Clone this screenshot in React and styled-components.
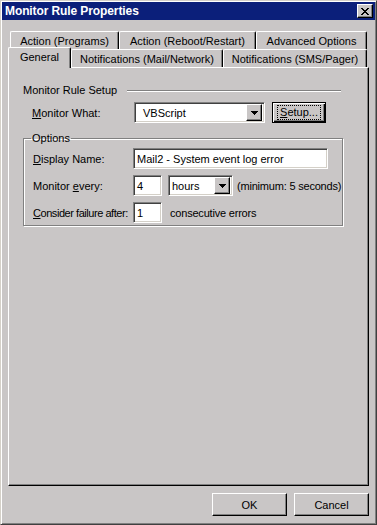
import React from 'react';
import styled, { createGlobalStyle, css } from 'styled-components';

const face = '#c9c6c6';

const GlobalStyle = createGlobalStyle`
  html, body {
    margin: 0;
    padding: 0;
    background: ${face};
  }
  * {
    box-sizing: border-box;
  }
`;

const raised = css`
  border: 1px solid;
  border-color: #ffffff #000000 #000000 #ffffff;
  box-shadow: inset -1px -1px #808080, inset 1px 1px ${face};
`;

const sunken = css`
  border: 1px solid;
  border-color: #808080 #ffffff #ffffff #808080;
  box-shadow: inset 1px 1px #404040, inset -1px -1px #d4d0c8;
`;

const Window = styled.div`
  width: 377px;
  height: 525px;
  display: flex;
  flex-direction: column;
  background: ${face};
  border: 1px solid;
  border-color: #d4d0c8 #404040 #404040 #d4d0c8;
  box-shadow: inset 1px 1px #ffffff, inset -1px -1px #808080;
  padding: 1px;
  font-family: "Liberation Sans", Arial, sans-serif;
  font-size: 11px;
  color: #000;
`;

const TitleBar = styled.div`
  height: 18px;
  background: #0b1f7a;
  display: flex;
  align-items: center;
  justify-content: space-between;
  padding: 0 2px 0 3px;
  color: #fff;
  font-weight: bold;
  font-size: 12px;
  letter-spacing: -0.1px;
`;

const CloseButton = styled.div`
  width: 16px;
  height: 14px;
  background: ${face};
  ${raised};
  display: flex;
  align-items: center;
  justify-content: center;
`;

const Body = styled.div`
  flex: 1;
  display: flex;
  flex-direction: column;
  padding: 11px 6px 0 6px;
`;

const TabRow = styled.div`
  display: flex;
  height: 18px;
  padding-left: ${p => p.$offset || 0}px;
`;

const Tab = styled.div`
  width: ${p => p.$width}px;
  height: ${p => (p.$active ? 21 : 18)}px;
  margin-top: ${p => (p.$active ? -2 : 0)}px;
  position: relative;
  z-index: ${p => (p.$active ? 2 : 1)};
  background: ${face};
  border-top: 1px solid #ffffff;
  border-left: 1px solid #ffffff;
  border-right: 1px solid #000000;
  border-radius: 2px 2px 0 0;
  box-shadow: inset -1px 0 #808080;
  display: flex;
  align-items: center;
  justify-content: center;
  padding-bottom: ${p => (p.$active ? 3 : 0)}px;
  white-space: nowrap;
`;

const Panel = styled.div`
  height: 419px;
  display: flex;
  flex-direction: column;
  border: 1px solid;
  border-color: #ffffff #000000 #000000 #ffffff;
  box-shadow: inset -1px -1px #808080;
  padding: 16px 25px 0 14px;
`;

const SectionHeader = styled.div`
  display: flex;
  align-items: center;
  height: 13px;
  line-height: 13px;
`;

const EtchedLine = styled.div`
  flex: 1;
  height: 2px;
  margin: 1px 2px 0 10px;
  border-top: 1px solid #808080;
  border-bottom: 1px solid #ffffff;
`;

const FieldRow = styled.div`
  display: flex;
  align-items: center;
  height: 21px;
  margin-top: ${p => p.$top || 0}px;
  padding-left: ${p => p.$indent || 0}px;
`;

const Label = styled.span`
  width: ${p => p.$width || 100}px;
  flex-shrink: 0;
  white-space: nowrap;
  letter-spacing: ${p => (p.$tight ? '-0.45px' : 'normal')};
`;

const TextBox = styled.div`
  width: ${p => p.$width}px;
  height: 21px;
  background: #ffffff;
  ${sunken};
  display: flex;
  align-items: center;
  padding-left: ${p => p.$pad || 3}px;
  white-space: nowrap;
  overflow: hidden;
`;

const Combo = styled.div`
  width: ${p => p.$width}px;
  height: 21px;
  margin-left: ${p => p.$left || 0}px;
  background: #ffffff;
  ${sunken};
  display: flex;
  align-items: center;
  padding: 2px 2px 2px ${p => p.$pad || 3}px;
`;

const ComboText = styled.span`
  flex: 1;
  white-space: nowrap;
`;

const ArrowButton = styled.div`
  width: 16px;
  height: 17px;
  background: ${face};
  ${raised};
  display: flex;
  align-items: center;
  justify-content: center;
`;

const PushButton = styled.div`
  width: ${p => p.$width || 75}px;
  height: ${p => p.$height || 23}px;
  margin-left: ${p => p.$left || 0}px;
  background: ${face};
  display: flex;
  align-items: center;
  justify-content: center;
  ${p =>
    p.$focused
      ? css`
          border: 1px solid #000;
          box-shadow: inset 1px 1px #ffffff, inset -1px -1px #000000, inset -2px -2px #808080;
        `
      : raised};
`;

const FocusRect = styled.span`
  outline: 1px dotted #000;
  outline-offset: 0;
  padding: 0 2px;
  line-height: 13px;
`;

const Group = styled.fieldset`
  margin: 9px 0 0 0;
  padding: 3px 0 2px 9px;
  border: 1px solid #808080;
  box-shadow: inset 1px 1px #ffffff, 1px 1px #ffffff;
  display: flex;
  flex-direction: column;
  gap: 6px;
`;

const Legend = styled.legend`
  margin-left: -2px;
  padding: 0 1px;
  line-height: 13px;
`;

const Note = styled.span`
  margin-left: ${p => p.$left || 0}px;
  white-space: nowrap;
  letter-spacing: -0.2px;
`;

const Footer = styled.div`
  display: flex;
  justify-content: flex-end;
  padding: 7px 0 0 0;
`;

const DownArrow = () => (
  <svg width="7" height="4" viewBox="0 0 7 4">
    <path d="M0 0h7v1H0zM1 1h5v1H1zM2 2h3v1H2zM3 3h1v1H3z" fill="#000" />
  </svg>
);

const CloseGlyph = () => (
  <svg width="8" height="7" viewBox="0 0 8 7">
    <path
      d="M0 0h2v1H0zM6 0h2v1H6zM1 1h2v1H1zM5 1h2v1H5zM2 2h4v1H2zM3 3h2v1H3zM2 4h4v1H2zM1 5h2v1H1zM5 5h2v1H5zM0 6h2v1H0zM6 6h2v1H6z"
      fill="#000"
    />
  </svg>
);

const backTabs = [
  { label: 'Action (Programs)', width: 109 },
  { label: 'Action (Reboot/Restart)', width: 137 },
  { label: 'Advanced Options', width: 111 },
];

const frontTabs = [
  { label: 'General', width: 63, active: true },
  { label: 'Notifications (Mail/Network)', width: 152 },
  { label: 'Notifications (SMS/Pager)', width: 144 },
];

export default function App() {
  return (
    <>
      <GlobalStyle />
      <Window>
        <TitleBar>
          <span>Monitor Rule Properties</span>
          <CloseButton>
            <CloseGlyph />
          </CloseButton>
        </TitleBar>
        <Body>
          <TabRow $offset={2}>
            {backTabs.map(t => (
              <Tab key={t.label} $width={t.width}>{t.label}</Tab>
            ))}
          </TabRow>
          <TabRow>
            {frontTabs.map(t => (
              <Tab key={t.label} $width={t.width} $active={t.active}>{t.label}</Tab>
            ))}
          </TabRow>
          <Panel>
            <SectionHeader>
              <span>Monitor Rule Setup</span>
              <EtchedLine />
            </SectionHeader>
            <FieldRow $top={5} $indent={9}>
              <Label $width={102}><u>M</u>onitor What:</Label>
              <Combo $width={131} $pad={8}>
                <ComboText>VBScript</ComboText>
                <ArrowButton><DownArrow /></ArrowButton>
              </Combo>
              <PushButton $width={54} $height={21} $left={7} $focused>
                <FocusRect><u>S</u>etup...</FocusRect>
              </PushButton>
            </FieldRow>
            <Group>
              <Legend>Options</Legend>
              <FieldRow>
                <Label><u>D</u>isplay Name:</Label>
                <TextBox $width={195}>Mail2 - System event log error</TextBox>
              </FieldRow>
              <FieldRow>
                <Label>Monitor <u>e</u>very:</Label>
                <TextBox $width={29}>4</TextBox>
                <Combo $width={65} $left={6} $pad={3}>
                  <ComboText>hours</ComboText>
                  <ArrowButton><DownArrow /></ArrowButton>
                </Combo>
                <Note $left={4}>(minimum: 5 seconds)</Note>
              </FieldRow>
              <FieldRow>
                <Label $tight><u>C</u>onsider failure after:</Label>
                <TextBox $width={29}>1</TextBox>
                <Note $left={8}>consecutive errors</Note>
              </FieldRow>
            </Group>
          </Panel>
          <Footer>
            <PushButton>OK</PushButton>
            <PushButton $left={7}>Cancel</PushButton>
          </Footer>
        </Body>
      </Window>
    </>
  );
}
